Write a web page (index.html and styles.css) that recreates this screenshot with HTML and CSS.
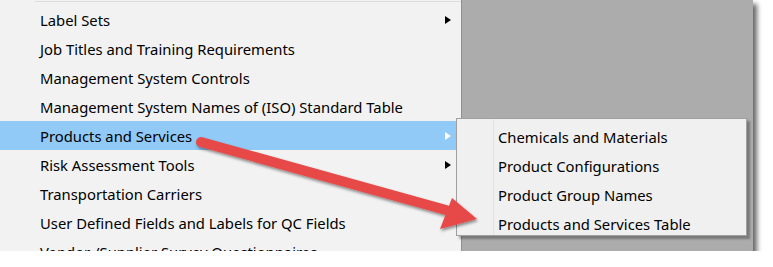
FILE: index.html
```html
<!DOCTYPE html>
<html lang="en">
  <head>
    <meta charset="UTF-8" />
    <title>Menu</title>
    <link rel="stylesheet" href="styles.css">
  </head>
  <body>
    <div class="shot">
      <div class="menu">
        <div class="sep"></div>
        <div class="item">Label Sets<span class="more"></span></div>
        <div class="item">Job Titles and Training Requirements</div>
        <div class="item">Management System Controls</div>
        <div class="item">Management System Names of (ISO) Standard Table</div>
        <div class="item active">Products and Services<span class="more"></span></div>
        <div class="item">Risk Assessment Tools<span class="more"></span></div>
        <div class="item">Transportation Carriers</div>
        <div class="item">User Defined Fields and Labels for QC Fields</div>
        <div class="item">Vendor /Supplier Survey Questionnaires</div>
      </div>
      <div class="backdrop"></div>

      <div class="submenu">
        <div class="item">Chemicals and Materials</div>
        <div class="item">Product Configurations</div>
        <div class="item">Product Group Names</div>
        <div class="item">Products and Services Table</div>
      </div>

      <svg class="pointer" width="773" height="267" viewBox="0 0 773 267">
        <defs>
          <filter id="sh" x="-10%" y="-30%" width="130%" height="160%">
            <feDropShadow dx="1" dy="2" stdDeviation="1.5" flood-color="#000" flood-opacity="0.45" />
          </filter>
        </defs>
        <g filter="url(#sh)">
          <line x1="201" y1="142" x2="446" y2="210" stroke="#e64a47" stroke-width="10" stroke-linecap="round" />
          <polygon points="452,198 477,219 440,229" fill="#e64a47" />
        </g>
      </svg>
    </div>
  </body>
</html>
```

FILE: styles.css
```css
body {
  margin: 0;
  background-color: #fff;
  font-family: "Noto Sans", "Open Sans", sans-serif;
  font-size: 14.8px;
  color: #000;
}
.shot {
  position: relative;
  display: flex;
  width: 753px;
  height: 251px;
  box-shadow: 4px 4px 5px rgba(0, 0, 0, 0.6);
}
.menu {
  width: 461px;
  background-color: #f2f2f2;
  border-right: 1px solid #8f8f8f;
  overflow: hidden;
}
.sep {
  height: 1px;
  margin: 1px 0 3px 35px;
  background-color: #dcdcdc;
}
.item {
  position: relative;
  height: 29px;
  line-height: 31px;
  padding-left: 40px;
  white-space: nowrap;
}
.item.active {
  background-color: #91c9f7;
}
.more {
  position: absolute;
  right: 10px;
  top: 11px;
  border-left: 6px solid #000;
  border-top: 4px solid transparent;
  border-bottom: 4px solid transparent;
}
.active .more {
  border-left-color: #fff;
}
.backdrop {
  flex: 1;
  background-color: #acacac;
}
.submenu {
  position: absolute;
  left: 456px;
  top: 118px;
  width: 291px;
  height: 118px;
  padding-top: 3px;
  box-sizing: border-box;
  background-color: #f0f0f0;
  border: 1px solid #a0a0a0;
  box-shadow: 3px 3px 2px rgba(0, 0, 0, 0.3);
  background-image: linear-gradient(#e2e2e2, #e2e2e2);
  background-size: 1px 100%;
  background-position: 36px 0;
  background-repeat: no-repeat;
}
.submenu .item {
  padding-left: 41px;
}
.pointer {
  position: absolute;
  left: 0;
  top: 0;
  pointer-events: none;
}
```
